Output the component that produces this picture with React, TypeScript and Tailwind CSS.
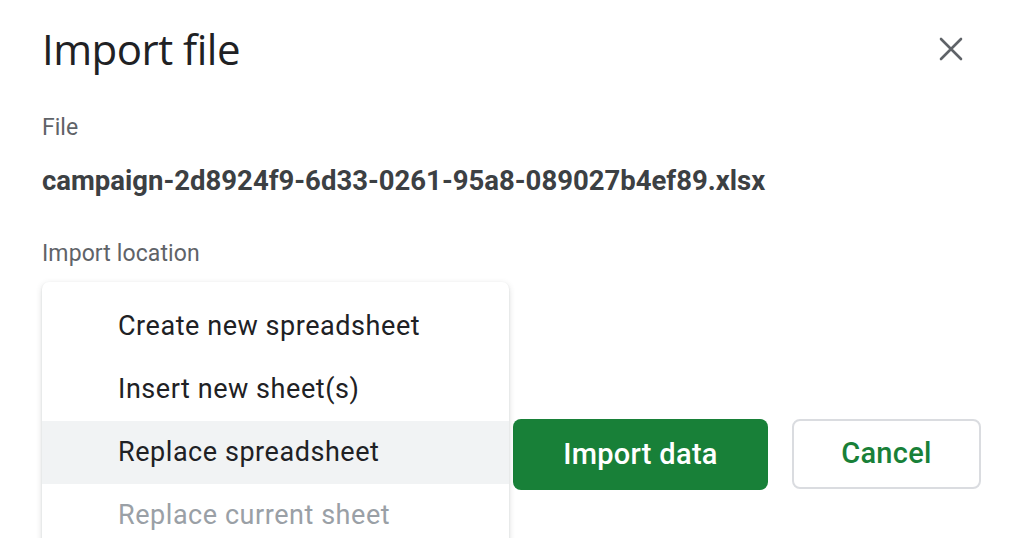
import React from "react";

const items = [
  { label: "Create new spreadsheet", active: false, disabled: false },
  { label: "Insert new sheet(s)", active: false, disabled: false },
  { label: "Replace spreadsheet", active: true, disabled: false },
  { label: "Replace current sheet", active: false, disabled: true },
];

function CloseIcon() {
  return (
    <svg width="24" height="24" viewBox="0 0 24 24" fill="none">
      <path d="M2 2L22 22M22 2L2 22" stroke="#5f6368" strokeWidth="2.6" strokeLinecap="round" />
    </svg>
  );
}

export default function App() {
  return (
    <div className="h-[538px] w-[1024px] overflow-hidden bg-white font-['Roboto',sans-serif]">
      <div className="flex flex-col pl-[42px] pr-[43px]">
        <div className="flex items-start justify-between pt-[21px]">
          <h1 className="font-['Open_Sans',sans-serif] text-[42px] leading-[56px] tracking-[-0.5px] text-[#202124]">
            Import file
          </h1>
          <button className="mr-[17px] mt-[15px] flex h-[26px] w-[26px] items-center justify-center">
            <CloseIcon />
          </button>
        </div>

        <div className="mt-[37px] text-[23px] leading-[28px] text-[#5f6368]">File</div>
        <div className="mt-[23px] text-[27.5px] font-bold leading-[32px] text-[#3c4043]">
          campaign-2d8924f9-6d33-0261-95a8-089027b4ef89.xlsx
        </div>

        <div className="mt-[43px] text-[23px] leading-[28px] tracking-[0.1px] text-[#5f6368]">Import location</div>

        <div className="relative">
          <div className="absolute left-0 top-[14px] z-10 w-[467px] rounded-[7px] bg-white pt-[13px] shadow-[0_2px_6px_rgba(60,64,67,0.18),0_1px_2px_rgba(60,64,67,0.12)]">
            {items.map((it) => (
              <div
                key={it.label}
                className={
                  "flex h-[63px] items-center pl-[76px] text-[27px] tracking-[0.55px] " +
                  (it.active ? "bg-[#f1f3f4] " : "") +
                  (it.disabled ? "text-[#9aa0a6]" : "text-[#202124]")
                }
              >
                {it.label}
              </div>
            ))}
          </div>

          <div className="flex justify-end gap-[24px] pt-[151px]">
            <button className="h-[71px] w-[255px] rounded-[8px] bg-[#188038] text-[29px] font-medium tracking-[0.3px] text-white">
              Import data
            </button>
            <button className="h-[70px] w-[189px] rounded-[8px] border-2 border-[#dadce0] bg-white text-[29px] font-medium tracking-[0.3px] text-[#188038]">
              Cancel
            </button>
          </div>
        </div>
      </div>
    </div>
  );
}
